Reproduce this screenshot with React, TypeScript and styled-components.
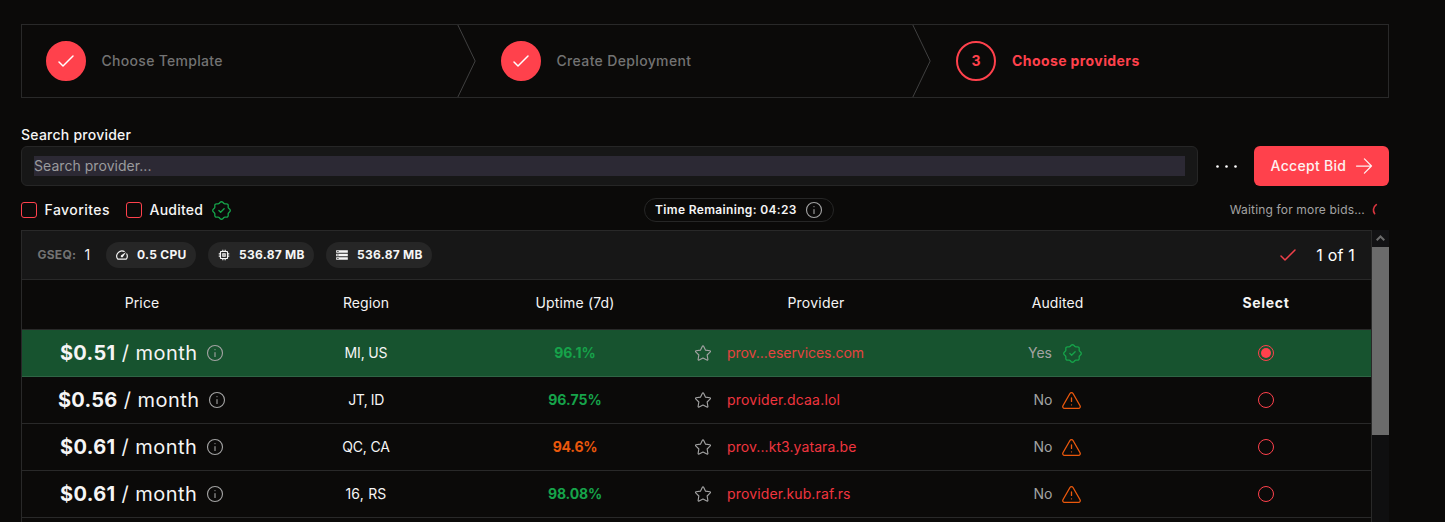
import React from "react";
import styled, { createGlobalStyle, css } from "styled-components";
import { MdMemory, MdSpeed, MdStorage } from "react-icons/md";

const c = {
  bg: "#0b0a09",
  card: "#171717",
  chip: "#262626",
  line: "#292929",
  accent: "#ff414c",
  green: "#16a34a",
  rowGreen: "#17532f",
  orange: "#ea580c",
  muted: "#a3a3a3",
  dim: "#737373",
  text: "#f5f5f5",
};

const GlobalStyle = createGlobalStyle`
  *, *::before, *::after { box-sizing: border-box; }
  html, body { margin: 0; background: ${c.bg}; }
  body {
    height: 522px;
    overflow: hidden;
    color: ${c.text};
    font-family: Inter, "Liberation Sans", sans-serif;
    font-size: 14px;
    line-height: 20px;
  }
  svg { display: block; flex: none; }
`;

const Page = styled.main`
  display: flex;
  flex-direction: column;
  width: 1389px;
  height: 522px;
  padding: 24px 0 0 21px;
  overflow: hidden;
`;

const Text = styled.span<{ $track?: number }>`
  letter-spacing: ${(p) => p.$track ?? 0}px;
  white-space: pre;
`;

/* ---------- Icons ---------- */

const Stroke = styled.svg.attrs({ viewBox: "0 0 24 24", fill: "none" })<{ $size: number; $color?: string; $width?: number }>`
  width: ${(p) => p.$size}px;
  height: ${(p) => p.$size}px;
  stroke: ${(p) => p.$color ?? "currentColor"};
  stroke-width: ${(p) => p.$width ?? 1.5};
  stroke-linecap: round;
  stroke-linejoin: round;
`;

const CheckIcon = ({ color }: { color?: string }) => (
  <Stroke $size={24} $color={color}>
    <path d="M5 13L9 17L19 7" />
  </Stroke>
);

const BadgeIcon = () => (
  <Stroke $size={21} $color={c.green}>
    <path d="M10.5213 2.62368C11.3147 1.75255 12.6853 1.75255 13.4787 2.62368L14.4989 3.74391C14.8998 4.18418 15.4761 4.42288 16.071 4.39508L17.5845 4.32435C18.7614 4.26934 19.7307 5.23857 19.6757 6.41554L19.6049 7.92905C19.5771 8.52388 19.8158 9.10016 20.2561 9.50111L21.3763 10.5213C22.2475 11.3147 22.2475 12.6853 21.3763 13.4787L20.2561 14.4989C19.8158 14.8998 19.5771 15.4761 19.6049 16.071L19.6757 17.5845C19.7307 18.7614 18.7614 19.7307 17.5845 19.6757L16.071 19.6049C15.4761 19.5771 14.8998 19.8158 14.4989 20.2561L13.4787 21.3763C12.6853 22.2475 11.3147 22.2475 10.5213 21.3763L9.50111 20.2561C9.10016 19.8158 8.52388 19.5771 7.92905 19.6049L6.41553 19.6757C5.23857 19.7307 4.26934 18.7614 4.32435 17.5845L4.39508 16.071C4.42288 15.4761 4.18418 14.8998 3.74391 14.4989L2.62368 13.4787C1.75255 12.6853 1.75255 11.3147 2.62368 10.5213L3.74391 9.50111C4.18418 9.10016 4.42288 8.52388 4.39508 7.92905L4.32435 6.41553C4.26934 5.23857 5.23857 4.26934 6.41554 4.32435L7.92905 4.39508C8.52388 4.42288 9.10016 4.18418 9.50111 3.74391L10.5213 2.62368Z" />
    <path d="M9 12L11 14L15 10" />
  </Stroke>
);

const WarningIcon = () => (
  <Stroke $size={21} $color={c.orange}>
    <path d="M20.0429 21H3.95705C2.41902 21 1.45658 19.3364 2.22324 18.0031L10.2662 4.01533C11.0352 2.67792 12.9648 2.67791 13.7338 4.01532L21.7768 18.0031C22.5434 19.3364 21.581 21 20.0429 21Z" />
    <path d="M12 9V13" />
    <path d="M12 17.01L12.01 16.9989" />
  </Stroke>
);

const InfoIcon = () => (
  <Stroke $size={18} $color={c.muted}>
    <circle cx="12" cy="12" r="10" />
    <path d="M12 11.5V16.5" />
    <path d="M12 7.51L12.01 7.49889" />
  </Stroke>
);

const StarIcon = () => (
  <Stroke $size={18} $color={c.muted}>
    <path d="M8.58737 8.23597L11.1849 3.00376C11.5183 2.33208 12.4817 2.33208 12.8151 3.00376L15.4126 8.23597L21.2215 9.08017C21.9668 9.18848 22.2638 10.0994 21.7243 10.6219L17.5217 14.6918L18.5135 20.4414C18.6409 21.1798 17.8614 21.7428 17.1945 21.3941L12 18.678L6.80547 21.3941C6.1386 21.7428 5.35909 21.1798 5.48645 20.4414L6.47825 14.6918L2.27575 10.6219C1.73617 10.0994 2.03322 9.18848 2.77852 9.08017L8.58737 8.23597Z" />
  </Stroke>
);

/* ---------- Stepper ---------- */

const Stepper = styled.ol`
  display: grid;
  flex: none;
  grid-template-columns: 455px 455px 1fr;
  height: 74px;
  margin: 0;
  padding: 0;
  list-style: none;
  border: 1px solid ${c.line};
`;

const Step = styled.li<{ $active?: boolean }>`
  position: relative;
  display: flex;
  align-items: center;
  gap: ${(p) => (p.$active ? 16 : 15.5)}px;
  padding: 0 24px;
  color: ${(p) => (p.$active ? c.accent : c.dim)};
  font-weight: ${(p) => (p.$active ? 700 : 500)};
`;

const StepMark = styled.span<{ $done?: boolean }>`
  display: flex;
  align-items: center;
  justify-content: center;
  width: 40px;
  height: 40px;
  border: 2px solid ${c.accent};
  border-radius: 50%;
  color: ${(p) => (p.$done ? "#fff" : c.accent)};
  background: ${(p) => (p.$done ? c.accent : "transparent")};
`;

const Chevron = styled.svg`
  position: absolute;
  top: 0;
  right: 0;
  width: 20px;
  height: 100%;
  stroke: #404040;
`;

const StepDivider = () => (
  <Chevron viewBox="0 0 22 80" fill="none" preserveAspectRatio="none">
    <path d="M0 -2L20 40L0 82" vectorEffect="non-scaling-stroke" strokeLinejoin="round" />
  </Chevron>
);

/* ---------- Search ---------- */

const Label = styled.label`
  margin-top: 27px;
  font-weight: 500;
`;

const SearchRow = styled.div`
  display: flex;
  flex: none;
  align-items: center;
  height: 40px;
  margin-top: 1px;
`;

const SearchBox = styled.div`
  display: flex;
  align-items: center;
  width: 1177px;
  height: 40px;
  padding: 0 12px;
  border: 1px solid ${c.chip};
  border-radius: 6px;
  background: ${c.card};
`;

const SearchField = styled.div`
  flex: 1;
  height: 20px;
  color: #9b9b9d;
  background: #2c2934;
`;

const MoreButton = styled.button`
  display: flex;
  align-items: center;
  justify-content: center;
  width: 56px;
  height: 40px;
  padding: 0;
  border: 0;
  background: transparent;
  color: #fff;
`;

const AcceptButton = styled.button`
  display: flex;
  align-items: center;
  width: 135px;
  height: 40px;
  padding: 0 0 0 16.5px;
  gap: 7.5px;
  border: 0;
  border-radius: 6px;
  background: ${c.accent};
  color: #fdf1f1;
  font: 500 14px/20px Inter, "Liberation Sans", sans-serif;
`;

/* ---------- Filters ---------- */

const Filters = styled.div`
  display: grid;
  flex: none;
  grid-template-columns: 623px 190px 1fr;
  align-items: center;
  height: 24px;
  margin-top: 12px;
`;

const FilterGroup = styled.div`
  display: flex;
  align-items: center;
  font-weight: 500;
`;

const Check = styled.label<{ $gap: number }>`
  display: flex;
  align-items: center;
  gap: 7.5px;
  margin-right: ${(p) => p.$gap}px;
`;

const CheckSquare = styled.span`
  width: 16px;
  height: 16px;
  border: 1px solid ${c.accent};
  border-radius: 3px;
`;

const TimerPill = styled.div`
  display: flex;
  align-items: center;
  gap: 8px;
  height: 24px;
  padding-left: 10px;
  border: 1px solid ${c.chip};
  border-radius: 12px;
  font-size: 12px;
  font-weight: 600;
`;

const Waiting = styled.div`
  display: flex;
  align-items: center;
  justify-content: flex-end;
  gap: 7px;
  padding-right: 1px;
  color: ${c.muted};
  font-size: 12px;
`;

/* ---------- Table ---------- */

const Results = styled.section`
  display: flex;
  flex: 1;
  min-height: 0;
  margin-top: 8px;
`;

const Panel = styled.div`
  width: 1351px;
  border: 1px solid ${c.line};
  border-bottom: 0;
  overflow: hidden;
`;

const PanelHeader = styled.header`
  display: flex;
  align-items: center;
  height: 49px;
  padding: 0 16px 0 15.5px;
  border-bottom: 1px solid ${c.line};
  background: ${c.card};
`;

const GroupLabel = styled.span`
  width: 47px;
  color: ${c.dim};
  font-size: 12px;
  font-weight: 700;
`;

const GroupValue = styled.span`
  width: 21.5px;
`;

const Chip = styled.span<{ $width: number }>`
  display: flex;
  align-items: center;
  width: ${(p) => p.$width}px;
  height: 26px;
  margin-right: 12px;
  padding-left: 9px;
  gap: 8px;
  border-radius: 13px;
  background: ${c.chip};
  font-size: 12px;
  font-weight: 700;
`;

const Count = styled.span`
  display: flex;
  align-items: center;
  gap: 16px;
  margin-left: auto;
  color: #fff;
  font-size: 16px;
`;

const columns = css`
  display: grid;
  grid-template-columns: 240px 208px 210px 272px 211px 206px;
  align-items: center;
  justify-items: center;
`;

const HeadRow = styled.div`
  ${columns}
  height: 50px;
  padding-bottom: 3px;
  border-bottom: 1px solid ${c.line};
`;

const HeadCell = styled.span<{ $strong?: boolean }>`
  font-weight: ${(p) => (p.$strong ? 700 : 400)};
`;

const Row = styled.div<{ $selected?: boolean }>`
  ${columns}
  height: 47px;
  border-bottom: 1px solid ${(p) => (p.$selected ? "#2f6545" : c.line)};
  background: ${(p) => (p.$selected ? c.rowGreen : "transparent")};
`;

const Price = styled.div`
  display: flex;
  align-items: center;
  gap: 8.5px;
  font-size: 20px;
  line-height: 28px;
`;

const Amount = styled.b`
  font-weight: 700;
`;

const Uptime = styled.span<{ $low?: boolean }>`
  color: ${(p) => (p.$low ? c.orange : c.green)};
  font-weight: 700;
`;

const ProviderCell = styled.div`
  display: flex;
  align-items: center;
  justify-self: stretch;
  gap: 15px;
  padding-left: 14px;
`;

const ProviderLink = styled.a<{ $onGreen?: boolean }>`
  color: ${(p) => (p.$onGreen ? "#e5433f" : "#f0353f")};
`;

const AuditCell = styled.div<{ $audited?: boolean }>`
  display: flex;
  align-items: center;
  gap: ${(p) => (p.$audited ? 10 : 9)}px;
  padding: ${(p) => (p.$audited ? "0 4px 0 0" : "0 0 0 1px")};
  color: ${c.muted};
`;

const Radio = styled.span<{ $checked?: boolean }>`
  display: flex;
  align-items: center;
  justify-content: center;
  width: 16px;
  height: 16px;
  border: 1px solid ${c.accent};
  border-radius: 50%;

  &::after {
    content: "";
    display: ${(p) => (p.$checked ? "block" : "none")};
    width: 10px;
    height: 10px;
    border-radius: 50%;
    background: ${c.accent};
  }
`;

const ScrollTrack = styled.div`
  width: 17px;
  background: #0f0f10;
`;

const ScrollUp = styled.div`
  display: flex;
  align-items: center;
  justify-content: center;
  height: 17px;
  padding-bottom: 1px;
  background: #121214;
  color: #6b6b6b;
`;

const ScrollThumb = styled.div`
  height: 188px;
  background: #6b6b6b;
`;

type Bid = {
  amount: string;
  amountTrack: number;
  region: string;
  regionTrack: number;
  uptime: string;
  uptimeTrack: number;
  low?: boolean;
  provider: string;
  providerTrack: number;
  audited?: boolean;
};

const bids: Bid[] = [
  { amount: "$0.51", amountTrack: 0.35, region: "MI, US", regionTrack: -0.16, uptime: "96.1%", uptimeTrack: 0, provider: "prov...eservices.com", providerTrack: -0.04, audited: true },
  { amount: "$0.56", amountTrack: 0.25, region: "JT, ID", regionTrack: -0.45, uptime: "96.75%", uptimeTrack: 0.05, provider: "provider.dcaa.lol", providerTrack: 0.2 },
  { amount: "$0.61", amountTrack: 0.32, region: "QC, CA", regionTrack: -0.2, uptime: "94.6%", uptimeTrack: -0.25, low: true, provider: "prov...kt3.yatara.be", providerTrack: 0.08 },
  { amount: "$0.61", amountTrack: 0.32, region: "16, RS", regionTrack: 0.2, uptime: "98.08%", uptimeTrack: -0.17, provider: "provider.kub.raf.rs", providerTrack: 0.14 },
];

export default function App() {
  return (
    <>
      <GlobalStyle />
      <Page>
        <Stepper>
          <Step>
            <StepMark $done><CheckIcon /></StepMark>
            <Text $track={0.3}>Choose Template</Text>
            <StepDivider />
          </Step>
          <Step>
            <StepMark $done><CheckIcon /></StepMark>
            <Text $track={0.35}>Create Deployment</Text>
            <StepDivider />
          </Step>
          <Step $active>
            <StepMark>3</StepMark>
            <Text $track={0.41}>Choose providers</Text>
          </Step>
        </Stepper>

        <Label><Text $track={0.24}>Search provider</Text></Label>
        <SearchRow>
          <SearchBox>
            <SearchField><Text $track={0.05}>Search provider...</Text></SearchField>
          </SearchBox>
          <MoreButton aria-label="More">
            <svg width="24" height="6" viewBox="0 0 24 6" fill="currentColor">
              <circle cx="3.5" cy="3.5" r="1.3" />
              <circle cx="12.5" cy="3.5" r="1.3" />
              <circle cx="21.5" cy="3.5" r="1.3" />
            </svg>
          </MoreButton>
          <AcceptButton>
            <Text $track={0.31}>Accept Bid</Text>
            <Stroke $size={20}>
              <path d="M3 12L21 12M21 12L12.5 3.5M21 12L12.5 20.5" />
            </Stroke>
          </AcceptButton>
        </SearchRow>

        <Filters>
          <FilterGroup>
            <Check $gap={16}><CheckSquare /><Text $track={0.45}>Favorites</Text></Check>
            <Check $gap={8}><CheckSquare /><Text $track={0.24}>Audited</Text></Check>
            <BadgeIcon />
          </FilterGroup>
          <TimerPill>
            <Text $track={0.34}>Time Remaining: 04:23</Text>
            <InfoIcon />
          </TimerPill>
          <Waiting>
            <Text $track={0.16}>Waiting for more bids...</Text>
            <Stroke $size={16} $color="#d9363f" $width={2.4}>
              <path d="M6.5 4C1.5 7.5 1 13.5 4 17.5" />
            </Stroke>
          </Waiting>
        </Filters>

        <Results>
          <Panel>
            <PanelHeader>
              <GroupLabel><Text $track={0.25}>GSEQ:</Text></GroupLabel>
              <GroupValue>1</GroupValue>
              <Chip $width={90}><MdSpeed size={14} /><Text $track={0.28}>0.5 CPU</Text></Chip>
              <Chip $width={106}><MdMemory size={14} /><Text $track={0.28}>536.87 MB</Text></Chip>
              <Chip $width={106}><MdStorage size={14} /><Text $track={0.28}>536.87 MB</Text></Chip>
              <Count><CheckIcon color="#f0404a" /><Text $track={0.2}>1 of 1</Text></Count>
            </PanelHeader>

            <HeadRow>
              <HeadCell><Text $track={0.13}>Price</Text></HeadCell>
              <HeadCell><Text $track={0.08}>Region</Text></HeadCell>
              <HeadCell><Text $track={0.17}>Uptime (7d)</Text></HeadCell>
              <HeadCell><Text $track={0.23}>Provider</Text></HeadCell>
              <HeadCell><Text $track={0.07}>Audited</Text></HeadCell>
              <HeadCell $strong><Text $track={0.7}>Select</Text></HeadCell>
            </HeadRow>

            {bids.map((b, i) => (
              <Row key={b.provider} $selected={i === 0}>
                <Price>
                  <span>
                    <Amount><Text $track={b.amountTrack}>{b.amount}</Text></Amount>
                    <Text $track={0.48}>{" / month"}</Text>
                  </span>
                  <InfoIcon />
                </Price>
                <Text $track={b.regionTrack}>{b.region}</Text>
                <Uptime $low={b.low}><Text $track={b.uptimeTrack}>{b.uptime}</Text></Uptime>
                <ProviderCell>
                  <StarIcon />
                  <ProviderLink $onGreen={i === 0}><Text $track={b.providerTrack}>{b.provider}</Text></ProviderLink>
                </ProviderCell>
                <AuditCell $audited={b.audited}>
                  <Text>{b.audited ? "Yes" : "No"}</Text>
                  {b.audited ? <BadgeIcon /> : <WarningIcon />}
                </AuditCell>
                <Radio $checked={i === 0} />
              </Row>
            ))}
          </Panel>
          <ScrollTrack>
            <ScrollUp>
              <svg width="9" height="6" viewBox="0 0 9 6" fill="none" stroke="currentColor" strokeWidth="2">
                <path d="M0.7 5.3L4.5 1.5L8.3 5.3" />
              </svg>
            </ScrollUp>
            <ScrollThumb />
          </ScrollTrack>
        </Results>
      </Page>
    </>
  );
}
